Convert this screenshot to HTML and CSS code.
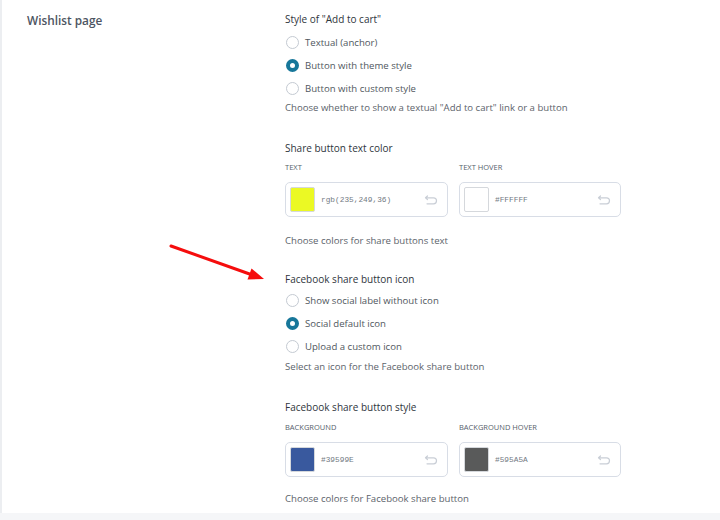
FILE: index.html
```html
<!DOCTYPE html>
<html>
<head>
<meta charset="utf-8">
<link rel="stylesheet" href="styles.css">
</head>
<body>
<div class="page">
  <div class="panel">
    <div class="side-title">Wishlist page</div>
    <div class="fields">
      <section class="field">
        <div class="field-title">Style of "Add to cart"</div>
        <div class="radios">
          <label class="radio"><span class="dot"></span>Textual (anchor)</label>
          <label class="radio"><span class="dot on"></span>Button with theme style</label>
          <label class="radio"><span class="dot"></span>Button with custom style</label>
        </div>
        <div class="desc">Choose whether to show a textual "Add to cart" link or a button</div>
      </section>

      <section class="field">
        <div class="field-title">Share button text color</div>
        <div class="colors">
          <div class="color">
            <div class="clabel">Text</div>
            <div class="cbox">
              <span class="swatch" style="background:rgb(235,249,36)"></span>
              <span class="cval">rgb(235,249,36)</span>
              <svg class="reset" viewBox="0 0 14 10" width="14" height="10"><path d="M3.5 1 L1.5 2.8 L3.5 4.6 M1.5 2.8 H9.5 a3 3 0 0 1 0 6 H3" fill="none" stroke="#c9ced6" stroke-width="1.2" stroke-linecap="round" stroke-linejoin="round"/></svg>
            </div>
          </div>
          <div class="color">
            <div class="clabel">Text hover</div>
            <div class="cbox">
              <span class="swatch" style="background:#FFFFFF"></span>
              <span class="cval">#FFFFFF</span>
              <svg class="reset" viewBox="0 0 14 10" width="14" height="10"><path d="M3.5 1 L1.5 2.8 L3.5 4.6 M1.5 2.8 H9.5 a3 3 0 0 1 0 6 H3" fill="none" stroke="#c9ced6" stroke-width="1.2" stroke-linecap="round" stroke-linejoin="round"/></svg>
            </div>
          </div>
        </div>
        <div class="desc after-box">Choose colors for share buttons text</div>
      </section>

      <section class="field pull">
        <div class="field-title">Facebook share button icon</div>
        <div class="radios tight">
          <label class="radio"><span class="dot"></span>Show social label without icon</label>
          <label class="radio"><span class="dot on"></span>Social default icon</label>
          <label class="radio"><span class="dot"></span>Upload a custom icon</label>
        </div>
        <div class="desc push">Select an icon for the Facebook share button</div>
      </section>

      <section class="field">
        <div class="field-title">Facebook share button style</div>
        <div class="colors lower">
          <div class="color">
            <div class="clabel">Background</div>
            <div class="cbox">
              <span class="swatch" style="background:#39599E"></span>
              <span class="cval">#39599E</span>
              <svg class="reset" viewBox="0 0 14 10" width="14" height="10"><path d="M3.5 1 L1.5 2.8 L3.5 4.6 M1.5 2.8 H9.5 a3 3 0 0 1 0 6 H3" fill="none" stroke="#c9ced6" stroke-width="1.2" stroke-linecap="round" stroke-linejoin="round"/></svg>
            </div>
          </div>
          <div class="color">
            <div class="clabel">Background hover</div>
            <div class="cbox">
              <span class="swatch" style="background:#595A5A"></span>
              <span class="cval">#595A5A</span>
              <svg class="reset" viewBox="0 0 14 10" width="14" height="10"><path d="M3.5 1 L1.5 2.8 L3.5 4.6 M1.5 2.8 H9.5 a3 3 0 0 1 0 6 H3" fill="none" stroke="#c9ced6" stroke-width="1.2" stroke-linecap="round" stroke-linejoin="round"/></svg>
            </div>
          </div>
        </div>
        <div class="desc after-box last">Choose colors for Facebook share button</div>
      </section>
    </div>
  </div>
  <svg class="arrow" width="720" height="520" viewBox="0 0 720 520">
    <line x1="171" y1="246" x2="251" y2="274.5" stroke="#f50d0d" stroke-width="3" stroke-linecap="round"/>
    <polygon points="264,279 247.5,279.5 251.5,268.5" fill="#f50d0d"/>
  </svg>
</div>
</body>
</html>
```

FILE: styles.css
```css
* { box-sizing: border-box; }
html, body {
  margin: 0;
  padding: 0;
  background: #f5f6f8;
}
body {
  font-family: "Open Sans", "Noto Sans", Arial, sans-serif;
  width: 720px;
  height: 520px;
  overflow: hidden;
}
.page {
  position: relative;
  width: 720px;
  height: 520px;
}
.panel {
  display: grid;
  grid-template-columns: 285px 1fr;
  background: #ffffff;
  border-left: 2px solid #eceef1;
  height: 513px;
  padding-top: 9px;
}
.side-title {
  padding-left: 25px;
  font-size: 11.8px;
  font-weight: 600;
  line-height: 20px;
  color: #4d5562;
  padding-top: 1px;
}
.fields {
  margin-left: -2px;
  display: flex;
  flex-direction: column;
  gap: 22px;
}
.field.pull { margin-top: -2px; }
.field-title {
  font-size: 10px;
  line-height: 20px;
  color: #2f353c;
  font-weight: 500;
}
.radios {
  display: flex;
  flex-direction: column;
  margin-top: 2px;
}
.radios.tight { margin-top: 0; }
.radio {
  display: flex;
  align-items: center;
  height: 23px;
  font-size: 9.6px;
  color: #50575e;
}
.dot {
  width: 13px;
  height: 13px;
  border-radius: 50%;
  border: 1px solid #c4cad2;
  background: #fff;
  margin-left: 1px;
  margin-right: 6px;
  flex: none;
}
.dot.on {
  border: 4px solid #17779a;
}
.desc {
  font-size: 9.6px;
  line-height: 16px;
  color: #5c636b;
}
.desc.push { margin-top: 1px; }
.desc.after-box { margin-top: 16px; }
.desc.after-box.last { margin-top: 14px; }
.colors {
  display: grid;
  grid-template-columns: 163px 162px;
  column-gap: 11px;
  margin-top: 3px;
}
.colors.lower { margin-top: 4px; }
.clabel {
  font-size: 7.5px;
  line-height: 12px;
  text-transform: uppercase;
  color: #56606b;
  font-weight: 500;
}
.cbox {
  margin-top: 9px;
  height: 35px;
  border: 1px solid #d8dde6;
  border-radius: 5px;
  display: flex;
  align-items: center;
  padding-left: 4px;
  padding-right: 9px;
}
.swatch {
  width: 25px;
  height: 25px;
  border: 1px solid #d5d8dc;
  border-radius: 2px;
  flex: none;
}
.cval {
  font-family: "Liberation Mono", "DejaVu Sans Mono", monospace;
  font-size: 7.8px;
  color: #737a83;
  margin-left: 6px;
  flex: 1;
}
.reset {
  flex: none;
}
.arrow {
  position: absolute;
  left: 0;
  top: 0;
  pointer-events: none;
}
```
